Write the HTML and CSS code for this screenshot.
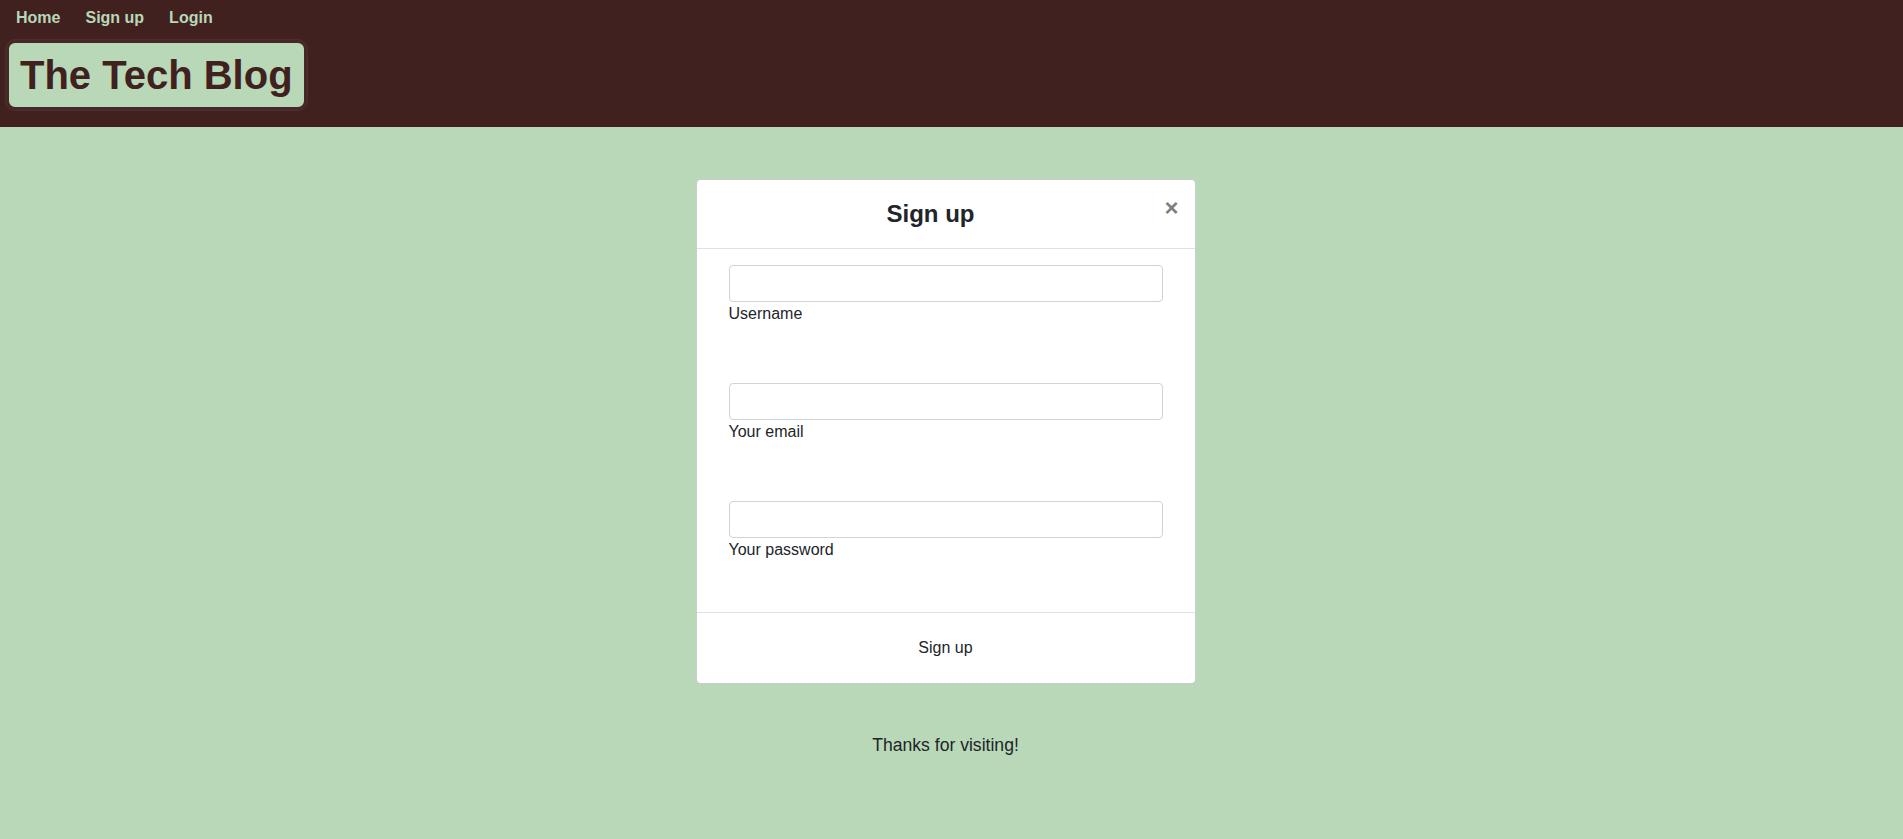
FILE: index.html
```html
<!DOCTYPE html>
<html lang="en">
<head>
<meta charset="utf-8">
<title>The Tech Blog</title>
<link rel="stylesheet" href="styles.css">
</head>
<body>
<header class="site-header">
  <nav class="nav">
    <a class="nav-link" href="#">Home</a>
    <a class="nav-link" href="#">Sign up</a>
    <a class="nav-link" href="#">Login</a>
  </nav>
  <h1 class="brand">The Tech Blog</h1>
</header>
<main class="main">
  <div class="modal">
    <div class="modal-header">
      <h5 class="modal-title">Sign up</h5>
      <button class="close" type="button" aria-label="Close">&times;</button>
    </div>
    <form class="modal-body">
      <div class="field">
        <input class="form-control" type="text" id="username">
        <label class="field-label" for="username">Username</label>
      </div>
      <div class="field">
        <input class="form-control" type="email" id="email">
        <label class="field-label" for="email">Your email</label>
      </div>
      <div class="field">
        <input class="form-control" type="password" id="password">
        <label class="field-label" for="password">Your password</label>
      </div>
    </form>
    <div class="modal-footer">
      <button class="btn" type="button">Sign up</button>
    </div>
  </div>
  <footer class="site-footer">Thanks for visiting!</footer>
</main>
</body>
</html>
```
FILE: styles.css
```css
* { box-sizing: border-box; }

html, body {
  margin: 0;
  padding: 0;
}

body {
  font-family: "Liberation Sans", Arial, sans-serif;
  font-size: 16px;
  line-height: 1.5;
  color: #212529;
  background: #b8d8b8;
  min-height: 839px;
}

.site-header {
  background: #402120;
  display: flex;
  flex-direction: column;
  align-items: flex-start;
  padding: 9px 0 17px 6px;
}

.nav {
  display: flex;
  gap: 25px;
  padding-left: 10px;
  line-height: 18px;
}

.nav-link {
  color: #b8d8b8;
  font-weight: bold;
  font-size: 16px;
  text-decoration: none;
}

.brand {
  margin: 13px 0 0 0;
  background: #b8d8b8;
  color: #402120;
  font-size: 40px;
  font-weight: bold;
  line-height: 46px;
  padding: 9px 11px 9px 11px;
  border: 3px solid #472826;
  border-radius: 9px;
  box-shadow: 0 0 0 1px rgba(255, 255, 255, 0.06);
}

.main {
  display: flex;
  flex-direction: column;
  align-items: center;
  padding: 52px 12px 0 0;
}

.modal {
  width: 500px;
  background: #fff;
  border: 1px solid rgba(0, 0, 0, 0.2);
  border-radius: 4.8px;
  display: flex;
  flex-direction: column;
}

.modal-header {
  display: flex;
  align-items: flex-start;
  padding: 16px;
  border-bottom: 1px solid #dee2e6;
}

.modal-title {
  flex: 1;
  margin: 0;
  text-align: center;
  font-size: 24px;
  font-weight: bold;
  line-height: 36px;
}

.close {
  padding: 16px;
  margin: -16px -16px -16px auto;
  border: 0;
  background: transparent;
  font-family: "Liberation Sans", Arial, sans-serif;
  font-size: 24px;
  font-weight: bold;
  line-height: 1;
  color: #000;
  opacity: 0.5;
  cursor: pointer;
}

.modal-body {
  display: flex;
  flex-direction: column;
  gap: 57px;
  padding: 16px 32px 50px 32px;
  margin: 0;
}

.field {
  display: flex;
  flex-direction: column;
}

.form-control {
  display: block;
  width: 100%;
  height: 37px;
  padding: 6px 12px;
  font-size: 16px;
  border: 1px solid #ced4da;
  border-radius: 4px;
  background: #fff;
}

.field-label {
  font-size: 16px;
  line-height: 24px;
}

.modal-footer {
  display: flex;
  justify-content: center;
  padding: 12px;
  border-top: 1px solid #dee2e6;
}

.btn {
  margin: 4px;
  height: 38px;
  padding: 6px 12px;
  font-family: "Liberation Sans", Arial, sans-serif;
  font-size: 16px;
  line-height: 24px;
  color: #212529;
  background: transparent;
  border: 1px solid transparent;
  border-radius: 4px;
}

.site-footer {
  margin-top: 48px;
  font-size: 17.6px;
  line-height: 27px;
  color: #212529;
}
```
